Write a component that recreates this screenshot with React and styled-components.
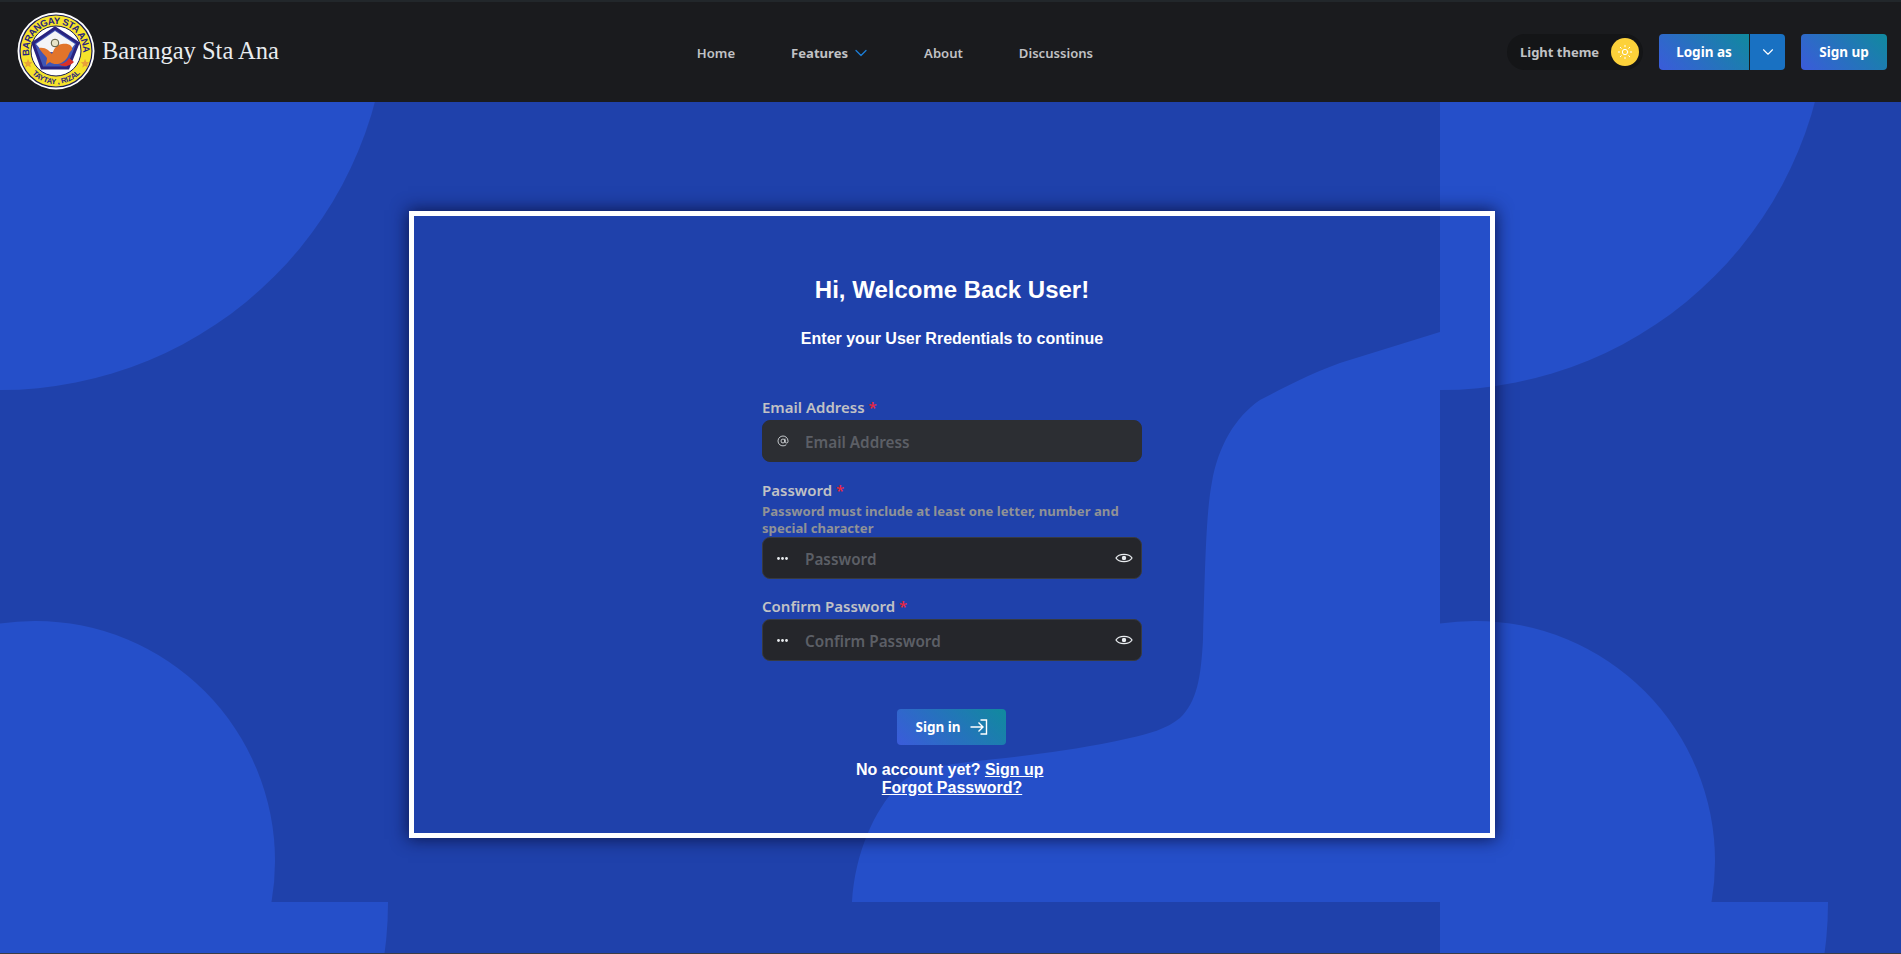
import React from "react"
import styled, { createGlobalStyle } from "styled-components"
import { ChevronDown, Sun, AtSign } from "lucide-react"

const ui = `"Noto Sans", "Open Sans", sans-serif`
const arial = `"Liberation Sans", Arial, sans-serif`

const Global = createGlobalStyle`
  html, body { margin: 0; padding: 0; height: 100%; background: #1f41ab; }
  * { box-sizing: border-box; }
  #root { height: 100%; }
`

const Page = styled.div`
  height: 954px;
  display: flex;
  flex-direction: column;
  overflow: hidden;
  border-bottom: 1px solid #3a3d45;
`
const Header = styled.header`
  height: 102px;
  flex: none;
  display: flex;
  justify-content: space-between;
  align-items: center;
  padding: 0 14px 0 17px;
  background: #1a1b1e;
  border-top: 2px solid #22272b;
`
const Brand = styled.div`
  display: flex;
  align-items: center;
  gap: 7px;
  padding-bottom: 3px;
`
const BrandName = styled.span`
  font-family: "Liberation Serif", serif;
  font-size: 24.5px;
  color: #e9ecef;
`
const Nav = styled.nav`
  display: flex;
  align-items: center;
  gap: 56px;
  padding: 2px 0 0 4px;
`
const NavItem = styled.a`
  display: flex;
  align-items: center;
  gap: 3px;
  font-family: ${ui};
  font-size: 13.1px;
  font-weight: ${props => (props.$bold ? 700 : 600)};
  color: #c1c2c5;
`
const NavCaret = styled(ChevronDown)`
  margin-right: -3px;
  color: #1c7ed6;
`
const Actions = styled.div`
  display: flex;
  align-items: center;
  justify-content: flex-end;
  gap: 16px;
`
const ThemeToggle = styled.div`
  width: 136px;
  height: 36px;
  display: flex;
  align-items: center;
  justify-content: space-between;
  padding: 0 4px 0 13px;
  border-radius: 18px;
  background: #141517;
  font-family: ${ui};
  font-size: 13px;
  font-weight: 700;
  color: #c1c2c5;
`
const SunBadge = styled.span`
  width: 28px;
  height: 28px;
  display: flex;
  align-items: center;
  justify-content: center;
  border-radius: 50%;
  background: #fcd13a;
  color: #fff;
`
const SplitButton = styled.div`
  display: flex;
  gap: 1px;
`
const GradientButton = styled.button`
  height: 36px;
  width: ${props => props.$width}px;
  display: flex;
  align-items: center;
  justify-content: center;
  gap: ${props => props.$gap || 0}px;
  padding: 0;
  border: 0;
  border-radius: ${props => props.$radius || "4px"};
  background: linear-gradient(45deg, #3b5bdb, #108a9e);
  font-family: ${ui};
  font-size: 13.5px;
  font-weight: 700;
  color: #fff;
`
const CaretButton = styled.button`
  width: 35px;
  height: 36px;
  display: flex;
  align-items: center;
  justify-content: center;
  padding: 0;
  border: 0;
  border-radius: 0 4px 4px 0;
  background: #1971c2;
  color: #fff;
`

const Main = styled.main`
  position: relative;
  flex: 1;
  display: flex;
  justify-content: center;
  padding: 109px 0 0 3px;
`
const Backdrop = styled.svg`
  position: absolute;
  inset: 0;
  width: 100%;
  height: 100%;
`
const Card = styled.section`
  position: relative;
  width: 1086px;
  height: 627px;
  display: flex;
  flex-direction: column;
  align-items: center;
  padding-top: 60px;
  border: 5px solid #fff;
  box-shadow: 0 0 16px 1px rgba(8, 14, 60, 0.85);
`
const Title = styled.h1`
  margin: 0;
  font-family: ${arial};
  font-size: 24px;
  line-height: 28px;
  font-weight: 700;
  color: #fff;
`
const Subtitle = styled.p`
  margin: 25px 0 0;
  font-family: ${arial};
  font-size: 16px;
  line-height: 20px;
  font-weight: 700;
  color: #fff;
`
const Form = styled.form`
  width: 380px;
  margin-top: 50px;
  display: flex;
  flex-direction: column;
`
const Field = styled.div`
  margin-bottom: ${props => props.$gap || 0}px;
`
const Label = styled.label`
  display: block;
  height: 21px;
  font-family: ${ui};
  font-size: 15px;
  line-height: 17px;
  font-weight: 600;
  color: #c1c2c5;
`
const Star = styled.span`
  color: #e8273f;
`
const Hint = styled.div`
  font-family: ${ui};
  font-size: 13.15px;
  line-height: 17px;
  font-weight: 700;
  color: #909296;
`
const InputBox = styled.div`
  height: 42px;
  display: flex;
  align-items: center;
  padding: 0 8px 0 14px;
  border-radius: 8px;
  border: 1px solid ${props => (props.$filled ? "#2c2e33" : "#373a40")};
  background: ${props => (props.$filled ? "#2c2e33" : "#25262b")};
  color: #e9ecef;
`
const IconSlot = styled.span`
  width: 28px;
  display: flex;
  align-items: center;
`
const Placeholder = styled.span`
  flex: 1;
  padding-top: 1px;
  font-family: ${ui};
  font-size: 15.3px;
  font-weight: 600;
  color: #5c5f66;
`
const SignInRow = styled.div`
  margin: 48px 1px 0 0;
`
const Links = styled.div`
  margin-top: 16px;
  font-family: ${arial};
  font-size: 16px;
  line-height: 18px;
  font-weight: 700;
  color: #fff;
  text-align: center;
`
const Underlined = styled.a`
  text-decoration: underline;
`

function Logo() {
  return (
    <svg width="78" height="78" viewBox="0 0 78 78">
      <defs>
        <path id="top-arc" d="M12.4 43.7A27 27 0 1 1 65.6 43.7" />
        <path id="bottom-arc" d="M13.7 60.2A33 33 0 0 0 64.3 60.2" />
      </defs>
      <circle cx="39" cy="39" r="38.5" fill="#fff" />
      <circle cx="39" cy="39" r="36" fill="#f6e32c" stroke="#1a1b50" strokeWidth="1.2" />
      <circle cx="39" cy="39" r="25" fill="#fff" stroke="#1a1b50" strokeWidth="1" />
      <text fontFamily="Liberation Sans" fontWeight="700" fontSize="9.5" fill="#28237f">
        <textPath href="#top-arc" textLength="91">BARANGAY STA ANA</textPath>
      </text>
      <text fontFamily="Liberation Sans" fontWeight="700" fontSize="7.5" fill="#28237f">
        <textPath href="#bottom-arc" startOffset="2" textLength="54">TAYTAY , RIZAL</textPath>
      </text>
      <path d="M38 16 61 31 51 56H25L16 31Z" fill="#3f55b5" stroke="#28237f" strokeWidth="3" />
      <path d="M38 19 58 32 52 40H26L19 32Z" fill="#f4f4f6" />
      <path d="M22 36c7-1 10 3 13 6 2-4 3-9 10-10 7-1 11 2 10 6-3 2-3 5-5 8-4 6-12 8-17 4-2 1-3 2-4 3 0-3 1-5 1-7-2-3-6-6-8-10Z" fill="#e2742a" />
      <path d="M42 52c4 0 8-2 10-6l5 4c-4 4-10 6-15 2Z" fill="#d8302a" />
      <circle cx="38" cy="31" r="3.8" fill="#e8e4c8" stroke="#55553a" strokeWidth="1" />
      <path d="M11 47l1.4 2.9 3.1.3-2.3 2.1.7 3.1-2.9-1.6-2.7 1.6.7-3.1-2.3-2.1 3.1-.3Z" fill="#e8a23a" />
      <path d="M68 47l1.4 2.9 3.1.3-2.3 2.1.7 3.1-2.9-1.6-2.7 1.6.7-3.1-2.3-2.1 3.1-.3Z" fill="#e8a23a" />
    </svg>
  )
}

function EyeIcon() {
  return (
    <svg width="18" height="12" viewBox="0 0 18 12" fill="none" stroke="currentColor" strokeWidth="1.3">
      <path d="M1 6C4 1.2 14 1.2 17 6 14 10.8 4 10.8 1 6Z" />
      <circle cx="9" cy="6" r="2.2" fill="currentColor" stroke="none" />
    </svg>
  )
}

function DotsIcon() {
  return (
    <svg width="11" height="3" viewBox="0 0 11 3" fill="currentColor">
      <circle cx="1.5" cy="1.5" r="1.4" />
      <circle cx="5.5" cy="1.5" r="1.4" />
      <circle cx="9.5" cy="1.5" r="1.4" />
    </svg>
  )
}

function EnterIcon() {
  return (
    <svg width="18" height="16" viewBox="0 0 18 16" fill="none" stroke="currentColor" strokeWidth="1.4">
      <path d="M0.5 8H12.5M8.5 3.5 13 8 8.5 12.5" />
      <path d="M10.5 1H16.5V15H10.5" />
    </svg>
  )
}

// hero pattern tile, 1440x900, starts just under the top edge of the page
function PatternBackdrop() {
  return (
    <Backdrop>
      <defs>
        <pattern id="hero" x="0" y="-100" width="1440" height="900" patternUnits="userSpaceOnUse">
          <rect width="1440" height="900" fill="#1f41ab" />
          <g fill="#254fc9">
            <circle cx="0" cy="0" r="388" />
            <circle cx="35" cy="859" r="240" />
            <path d="M1440 330 1340 361C1310 372 1285 385 1260 398 1235 415 1218 445 1212 480 1206 510 1205 570 1203 638 1201 675 1197 700 1180 716 1167 727 1148 732 1130 736 1090 745 1060 749 1030 753 1000 757 960 760 930 766 915 770 905 776 897 785 875 808 855 850 852 900H1440Z" />
          </g>
        </pattern>
      </defs>
      <rect width="100%" height="100%" fill="url(#hero)" />
    </Backdrop>
  )
}

export default function App() {
  return (
    <Page>
      <Global />
      <Header>
        <Brand>
          <Logo />
          <BrandName>Barangay Sta Ana</BrandName>
        </Brand>
        <Nav>
          <NavItem>Home</NavItem>
          <NavItem $bold>
            Features <NavCaret size={20} strokeWidth={1.5} />
          </NavItem>
          <NavItem>About</NavItem>
          <NavItem>Discussions</NavItem>
        </Nav>
        <Actions>
          <ThemeToggle>
            Light theme
            <SunBadge>
              <Sun size={16} strokeWidth={1.5} />
            </SunBadge>
          </ThemeToggle>
          <SplitButton>
            <GradientButton $width={90} $radius="4px 0 0 4px">Login as</GradientButton>
            <CaretButton>
              <ChevronDown size={18} strokeWidth={1.5} />
            </CaretButton>
          </SplitButton>
          <GradientButton $width={86}>Sign up</GradientButton>
        </Actions>
      </Header>
      <Main>
        <PatternBackdrop />
        <Card>
          <Title>Hi, Welcome Back User!</Title>
          <Subtitle>Enter your User Rredentials to continue</Subtitle>
          <Form>
            <Field $gap={20}>
              <Label>Email Address <Star>*</Star></Label>
              <InputBox $filled>
                <IconSlot><AtSign size={12} strokeWidth={1.6} /></IconSlot>
                <Placeholder>Email Address</Placeholder>
              </InputBox>
            </Field>
            <Field $gap={19}>
              <Label>Password <Star>*</Star></Label>
              <Hint>Password must include at least one letter, number and special character</Hint>
              <InputBox>
                <IconSlot><DotsIcon /></IconSlot>
                <Placeholder>Password</Placeholder>
                <EyeIcon />
              </InputBox>
            </Field>
            <Field>
              <Label>Confirm Password <Star>*</Star></Label>
              <InputBox>
                <IconSlot><DotsIcon /></IconSlot>
                <Placeholder>Confirm Password</Placeholder>
                <EyeIcon />
              </InputBox>
            </Field>
          </Form>
          <SignInRow>
            <GradientButton $width={109} $gap={9}>
              Sign in <EnterIcon />
            </GradientButton>
          </SignInRow>
          <Links>
            No account yet? <Underlined>Sign up</Underlined>&nbsp;
            <br />
            <Underlined>Forgot Password?</Underlined>
          </Links>
        </Card>
      </Main>
    </Page>
  )
}
